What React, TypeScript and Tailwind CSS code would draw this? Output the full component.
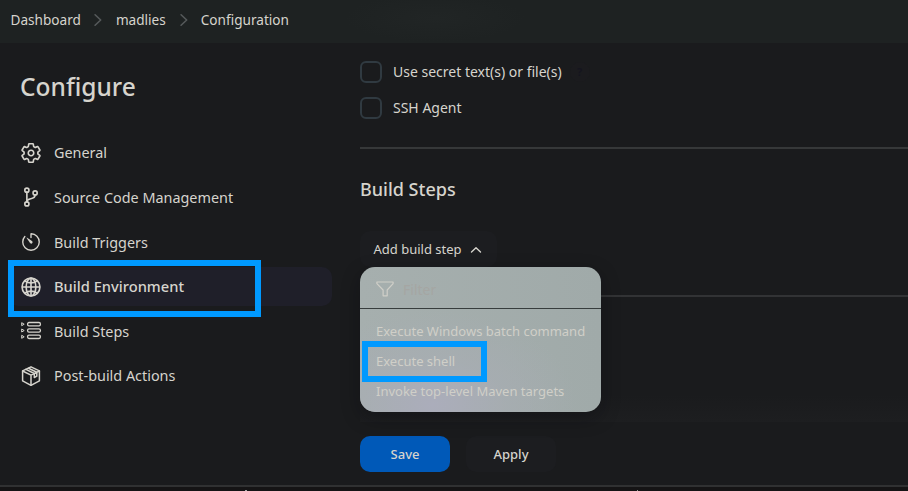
import React from "react";
import { IoSettingsOutline, IoGitBranchOutline, IoTimerOutline, IoGlobeOutline } from "react-icons/io5";

function Chevron({ className, d }: { className: string; d: string }) {
  return (
    <svg className={className} viewBox="0 0 12 12" fill="none" stroke="currentColor" strokeWidth="1.4" strokeLinecap="round" strokeLinejoin="round">
      <path d={d} />
    </svg>
  );
}

function StepsIcon() {
  return (
    <svg className="size-6" viewBox="-2 -2 24 24" fill="none" stroke="currentColor" strokeWidth="1.3" strokeLinejoin="round">
      {[3.2, 9.5, 15.8].map((y) => (
        <g key={y}>
          <rect x="6.6" y={y - 1.7} width="12.8" height="3.4" rx="1.4" />
          <path d={`M0.7 ${y - 1.5}v3l2.5-1.5z`} strokeWidth="1" />
        </g>
      ))}
    </svg>
  );
}

function PackageIcon() {
  return (
    <svg className="size-6" viewBox="-2 -2 24 24" fill="none" stroke="currentColor" strokeWidth="1.5" strokeLinejoin="round" strokeLinecap="round">
      <path d="M10 .8 18.4 4.9v9.9L10 19.3 1.6 14.8V4.9z" />
      <path d="M1.6 5 10 9.2 18.4 5M10 9.2v10M4.9 3.4l8.4 4.1v4l2.5-1.3V6.2L7.5 2.2" />
    </svg>
  );
}

const items = [
  { label: "General", icon: <IoSettingsOutline className="size-[22px] [&_path]:[stroke-width:38px]" /> },
  { label: "Source Code Management", icon: <IoGitBranchOutline className="size-[22px] [&_circle]:[stroke-width:38px] [&_path]:[stroke-width:38px]" /> },
  { label: "Build Triggers", icon: <IoTimerOutline className="size-[22px]" />, nudge: true },
  { label: "Build Environment", icon: <IoGlobeOutline className="size-[22px] [&_path]:[stroke-width:38px]" />, active: true },
  { label: "Build Steps", icon: <StepsIcon />, nudge: true },
  { label: "Post-build Actions", icon: <PackageIcon /> },
];

function Sidebar() {
  return (
    <aside className="w-[360px] shrink-0 pl-2 pt-[26px]">
      <h1 className="pl-3 text-[24.5px] leading-9 font-medium">Configure</h1>
      <nav className="mt-[28.4px] flex flex-col gap-[5.6px]">
        {items.map((item) => (
          <a
            key={item.label}
            className={`relative flex h-[39px] w-[324px] items-center gap-[11px] rounded-[10px] pl-[11px] ${item.active ? "bg-[#1f1f29] text-[14.7px] font-medium" : "text-[14.4px]"}`}
          >
            <span className="flex size-6 items-center justify-center">{item.icon}</span>
            <span className={item.nudge ? "pt-px" : item.active ? "pb-px" : ""}>{item.label}</span>
            {item.active && <span className="absolute left-0 -top-[7px] h-[57px] w-[253px] border-6 border-[#0099ff]" />}
          </a>
        ))}
      </nav>
    </aside>
  );
}

function Checkbox({ label, help }: { label: string; help?: boolean }) {
  return (
    <label className="flex h-[22px] items-center text-[14px]">
      <span className="mr-[11px] size-[22px] rounded-[6px] border-2 border-[#303a41]" />
      <span className="pb-[2px]">{label}</span>
      {help && <span className="ml-2 flex size-5 items-center justify-center rounded-full bg-[#1b1b1e] text-[11px] font-bold text-[#15151f]">?</span>}
    </label>
  );
}

function Dropdown() {
  return (
    <div className="absolute left-0 top-9 z-10 h-[145px] w-[241px] rounded-[15px] bg-[linear-gradient(to_right,#a6afae,#a0aaa9)] shadow-[0_6px_18px_rgba(8,10,14,0.35)]">
      <div className="absolute inset-0 rounded-[15px] bg-[radial-gradient(ellipse_60%_65%_at_30%_95%,#abadbb,#a9adb588_50%,transparent)]" />
      <div className="relative text-[13px] text-[#d0cfc8]">
        <div className="flex h-[42px] items-center gap-[9px] border-b border-[#373d3d] pl-4 pt-[3px]">
          <svg className="h-[16px] w-[18px]" viewBox="0 0 18 16" fill="none" stroke="currentColor" strokeWidth="1.2" strokeLinejoin="round">
            <path d="M.9 1h16.2v1.6L11.2 9v5.8H7.1V9L.9 2.6z" />
          </svg>
          <span className="text-[14px] text-[#a5a6a3]">Filter</span>
        </div>
        <div className="flex flex-col pt-2">
          <span className="flex h-[30px] items-center pl-4">Execute Windows batch command</span>
          <span className="relative flex h-[30px] items-center pl-4">
            Execute shell
            <span className="absolute left-[2px] -top-[6px] h-[41px] w-[125px] border-6 border-[#0099ff]" />
          </span>
          <span className="flex h-[30px] items-center pl-4">Invoke top-level Maven targets</span>
        </div>
      </div>
    </div>
  );
}

export default function App() {
  return (
    <div className="flex h-[491px] w-[908px] flex-col overflow-hidden bg-[#1a1b1d] font-['Noto_Sans',sans-serif] text-[#d6d4cd]">
      <header className="flex h-[43px] shrink-0 items-center bg-[radial-gradient(ellipse_90px_24px_at_435px_18px,#212525,#1e2222)] pb-[3px] pl-[10.5px] text-[13.6px]">
        <span>Dashboard</span>
        <Chevron className="mr-[11px] ml-[10px] size-[14px] text-[#55595a]" d="M3.5 1.5 8.3 6 3.5 10.5" />
        <span>madlies</span>
        <Chevron className="mr-[10px] ml-[11px] size-[14px] text-[#55595a]" d="M3.5 1.5 8.3 6 3.5 10.5" />
        <span>Configuration</span>
      </header>
      <div className="flex h-[442px] shrink-0">
        <Sidebar />
        <main className="flex flex-1 flex-col pt-[18px]">
          <div className="flex flex-col gap-[14px]">
            <Checkbox label="Use secret text(s) or file(s)" help />
            <Checkbox label="SSH Agent" />
          </div>
          <hr className="mt-[28px] border-t-2 border-[#363839]" />
          <h2 className="mt-[26px] text-[18px] leading-7 font-medium">Build Steps</h2>
          <div className="relative mt-7 h-[35px]">
            <button className="flex h-9 w-[137px] items-center gap-[8px] rounded-[10px] bg-[#1c1d20] pt-px pl-[13.5px] text-[13px]">
              Add build step
              <Chevron className="size-[12px]" d="M1.5 8 6 3.7 10.5 8" />
            </button>
            <Dropdown />
          </div>
          <hr className="mt-[29px] border-t-2 border-[#323335]" />
          <div className="mt-[98px] h-[27px] bg-linear-to-b from-[#1a1b1d] to-[#1d1e20]" />
          <div className="mt-[14px] flex gap-4 text-[13px] font-medium">
            <button className="h-9 w-[90px] rounded-[10px] bg-[#0059b8] pt-px">Save</button>
            <button className="h-9 w-[90px] rounded-[10px] bg-[#1c1d20] pt-px">Apply</button>
          </div>
        </main>
      </div>
      <footer className="flex h-[6px] shrink-0 items-end border-t-2 border-[#303132] bg-[#151415] pl-[245px]">
        <span className="h-px w-[2px] bg-[#aaa]" />
        <span className="ml-[390px] h-px w-px bg-[#999]" />
      </footer>
    </div>
  );
}
